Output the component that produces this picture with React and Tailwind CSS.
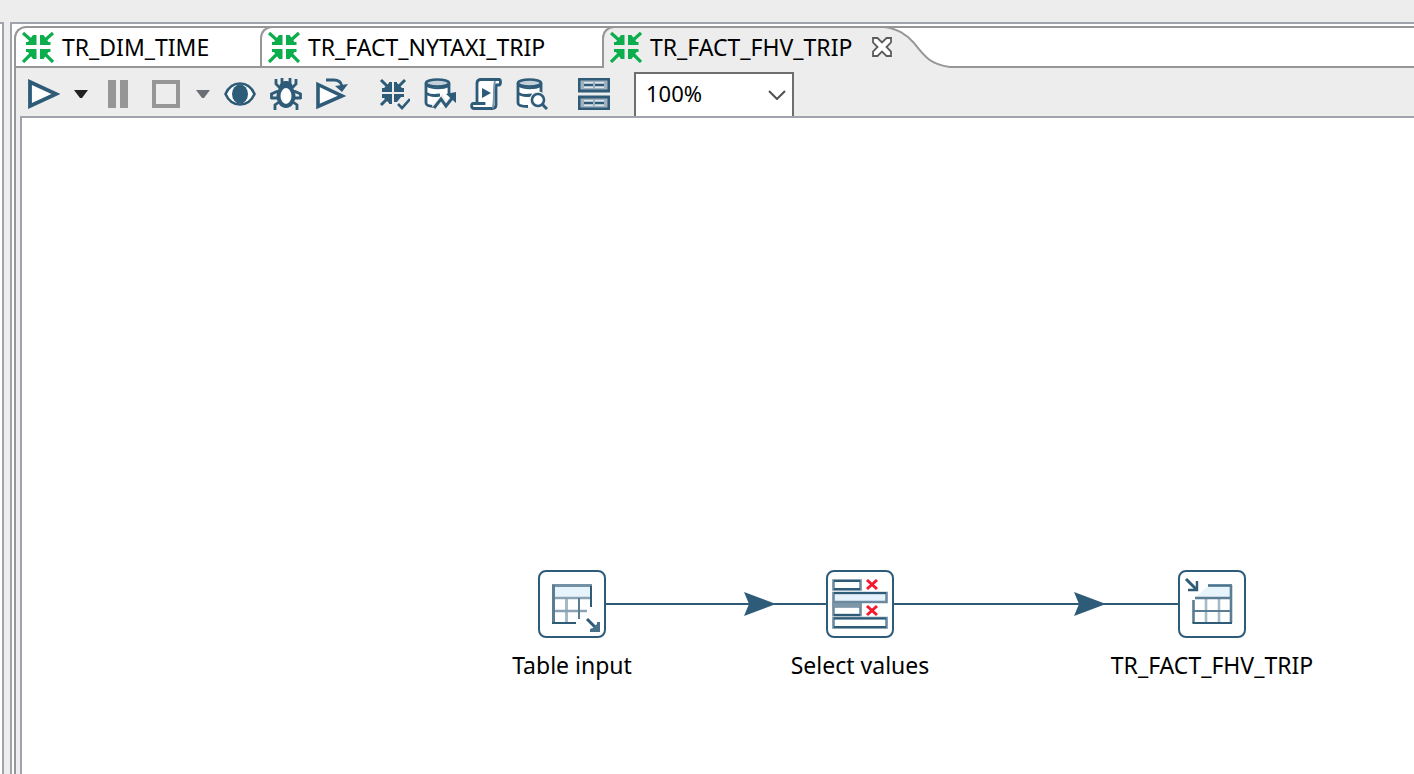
import { useState } from 'react';

const INK = '#2e5b78';

function TransformationIcon() {
  return (
    <svg viewBox="0 0 32 32" className="size-8 shrink-0" fill="#0bad4c" stroke="#0bad4c" aria-hidden="true">
      <path d="M1 2L10 10M31 2L22 10M1 31L10 22M31 31L22 22" fill="none" strokeWidth="3.200" />
      <g stroke="none">
        <path d="M14.500 4V14H4V11H6L11 4Z" />
        <path d="M18 4V14H28.500V11H26.500L21.500 4Z" />
        <path d="M14.500 28V18H4V21H6L11 28Z" />
        <path d="M18 28V18H28.500V21H26.500L21.500 28Z" />
      </g>
    </svg>
  );
}

function Glyph({ children }) {
  return (
    <svg viewBox="0 0 32 32" className="size-8" fill="none" stroke={INK} strokeWidth="3" aria-hidden="true">
      {children}
    </svg>
  );
}

const RunIcon = () => (
  <Glyph>
    <path d="M2 4L28 16L2 28Z" fill="#fff" strokeWidth="3.800" />
  </Glyph>
);

const EyeIcon = () => (
  <Glyph>
    <path d="M1.5 16C5 8 10 5.5 16 5.5S27 8 30.5 16C27 24 22 26.5 16 26.5S5 24 1.5 16Z" fill="#fff" strokeWidth="2.6" />
    <ellipse cx="16" cy="16" rx="8" ry="9.5" fill={INK} stroke="none" />
  </Glyph>
);

const BugIcon = () => (
  <Glyph>
    <path d="M6 1V6L10 10M26 1V6L22 10M12 0V5M20 0V5M1.500 21V16L8 13M30.500 21V16L24 13M1 20H7M31 20H25M5 32V27L9 24M27 32V27L23 24" strokeWidth="2.800" />
    <path d="M9 11C9 5 12 3 16 3S23 5 23 11Z" fill={INK} stroke="none" />
    <ellipse cx="16" cy="18" rx="7.500" ry="10" fill="#fff" strokeWidth="4" />
  </Glyph>
);

const ReplayIcon = () => (
  <Glyph>
    <path d="M2 6.500L26 18L2 28.500Z" fill="#fff" strokeWidth="3.600" />
    <path d="M10 2H18C23 2 25 4 26 8" strokeWidth="2.800" />
    <path d="M19 8L32 6L26 14Z" fill={INK} stroke="none" />
  </Glyph>
);

const VerifyIcon = () => (
  <Glyph>
    <path d="M3 2L10 9M27 2L20 9M3 27L10 20" />
    <g fill={INK} stroke="none">
      <path d="M14 4V14H4V10H6L11 5V4Z" />
      <path d="M16 4V14H26V10H24L19 5V4Z" />
      <path d="M14 26V16H4V20H6L11 25V26Z" />
      <path d="M16 16H26V19H23L19 24H16Z" />
    </g>
    <path d="M20 26L24 30L32 21" strokeWidth="2.600" />
  </Glyph>
);

function Cylinder() {
  return (
    <>
      <path d="M2 5V25C2 28 8 29.500 14 29H25V5" fill="#fff" stroke="none" />
      <path d="M2 5V25C2 27 5 28.500 12 28.500M25 5V16M2 15C5 17.500 10 18 16 17" strokeWidth="2.800" />
      <ellipse cx="13.500" cy="5" rx="11.500" ry="3.500" fill="#c3d0d9" strokeWidth="2.600" />
      <path d="M3 8C8 11 19 11 25 8" strokeWidth="2" />
    </>
  );
}

const ImpactIcon = () => (
  <Glyph>
    <Cylinder />
    <path d="M10 30L18 21L22 28L29 19" stroke="#ededed" strokeWidth="6" />
    <path d="M10 30L17 21L22 28L29 19" strokeWidth="3" />
    <path d="M22 16L32 14V25Z" fill={INK} stroke="none" />
  </Glyph>
);

const SqlIcon = () => (
  <Glyph>
    <path d="M7 24V5C7 2.500 8.500 1.500 11 1.500H29C31 1.500 31 7 29 7H26V27C26 29.500 24.500 30.500 22 30.500H4C1 30.500 1 25.500 3 25.500H14V27" fill="#fff" strokeWidth="2.800" />
    <path d="M22.500 30C25 27 23 9 25 3" stroke="#7f98aa" strokeWidth="2" />
    <path d="M12 10L21 15L12 20Z" fill={INK} stroke="none" />
  </Glyph>
);

const ExploreIcon = () => (
  <Glyph>
    <Cylinder />
    <circle cx="22" cy="22" r="8.500" fill="#ededed" stroke="none" />
    <path d="M26 26L31 31" strokeWidth="3" />
    <circle cx="22" cy="22" r="6" fill="#fff" strokeWidth="2.600" />
  </Glyph>
);

const ResultsIcon = () => (
  <Glyph>
    <path d="M1 1H31V13H1ZM1 19H31V31H1Z" fill="#9fb1be" strokeWidth="3" />
    <path d="M6 4H15V10H6ZM17 4H26V10H17ZM6 22H15V28H6ZM17 22H26V28H17Z" fill="#dfe7ec" stroke="none" />
    <path d="M6 7H15M17 7H26M6 25H15M17 25H26" strokeWidth="2.600" />
  </Glyph>
);

function PauseIcon() {
  return (
    <svg viewBox="0 0 34 32" className="h-8 w-[34px]" fill="#969696" aria-hidden="true">
      <path d="M6 2H14V30H6ZM18 2H26V30H18Z" />
    </svg>
  );
}

const StopIcon = () => (
  <Glyph>
    <path d="M4 4H28V28H4Z" stroke="#969696" strokeWidth="4" />
  </Glyph>
);

function Caret({ fill }) {
  return (
    <svg viewBox="0 0 14 8" className="h-2 w-3.5" fill={fill} aria-hidden="true">
      <path d="M0 0H14L8 8H6Z" />
    </svg>
  );
}

function ToolButton({ label, children }) {
  return (
    <button type="button" aria-label={label} title={label} className="flex shrink-0 items-center">
      {children}
    </button>
  );
}

function Tab({ title, className, active, onSelect }) {
  const tone = active ? 'bg-[#ededed] pb-0.5' : 'border-b-2 bg-white';
  return (
    <div className={`h-full shrink-0 border-t-2 border-[#969696] bg-white first:border-t-0 ${className}`}>
      <div className={`flex h-[42px] items-center rounded-tl-xl border-l-2 border-t-2 border-[#969696] ${tone} ${active ? '-mt-0.5' : 'tab-idle'}`}>
        <button type="button" role="tab" aria-selected={active} onClick={onSelect} className="flex items-center gap-2 pl-1.5">
          <TransformationIcon />
          <span className="whitespace-nowrap leading-8">{title}</span>
        </button>
        {active && (
          <button type="button" aria-label={`Close ${title}`} className="relative z-10 ml-5 shrink-0">
            <svg viewBox="0 0 20 20" className="size-5" fill="#fff" stroke="#5c5c5c" strokeWidth="1.800" aria-hidden="true">
              <path d="M1 1H5.500L10 5.500L14.500 1H19V5.500L14.500 10L19 14.500V19H14.500L10 14.500L5.500 19H1V14.500L5.500 10L1 5.500Z" />
            </svg>
          </button>
        )}
      </div>
    </div>
  );
}

const TableInputArt = () => (
  <>
    <path d="M15 16H53V27H15Z" fill="#e8f4fc" stroke="none" />
    <path d="M28.500 28V52" stroke="#a6b9c6" strokeWidth="3" />
    <path d="M16 41H49" stroke="#8ba2b2" strokeWidth="2.500" />
    <path d="M16 28H53" stroke="#8ba2b2" strokeWidth="2.500" />
    <path d="M41 28V49" strokeWidth="2" stroke="#5b7d94" />
    <path d="M14 15.500H54" stroke="#7390a4" strokeWidth="3" />
    <path d="M15.500 15V53" stroke="#5b7d94" strokeWidth="3" />
    <path d="M53 16V37M14 53H38" strokeWidth="2" />
    <path d="M49 49L58 58" strokeWidth="3" />
    <path d="M62 52V62H52V59L55 58L59 54V52Z" fill="#47708b" stroke="none" />
  </>
);

const SelectValuesArt = () => (
  <>
    <path d="M7.500 10.500H34.500V19.500H7.500ZM7.500 36.500H34.500V45H7.500ZM7.500 48H60.500V57.500H7.500Z" fill="#fff" stroke="#6b8a9f" strokeWidth="2.600" />
    <path d="M6 33H36V37H6Z" fill="#7d97a9" stroke="none" />
    <path d="M7.500 23H60.500V32H7.500Z" fill="#e6f1fb" stroke="#6b8a9f" strokeWidth="2.600" />
    <path d="M8 11H34M8 19H34M8 23H60M8 45H34M8 48.500H60M8 57H60" strokeWidth="2" />
    <path d="M41 10L51 19M51 10L41 19M41 36L51 45M51 36L41 45" stroke="#f5182f" strokeWidth="3" />
  </>
);

const TableOutputArt = () => (
  <>
    <path d="M17 28L29 17H53V28Z" fill="#e8f4fc" stroke="none" />
    <path d="M28 28V52M41 28V52" stroke="#a6b9c6" strokeWidth="2.600" />
    <path d="M15 41H53" stroke="#5b7d94" strokeWidth="2" />
    <path d="M30 15.500H54" stroke="#47708b" strokeWidth="2.600" />
    <path d="M17 28H53M53 15V53M15.500 53V30" stroke="#5b7d94" strokeWidth="2.600" />
    <path d="M14.500 53H54" strokeWidth="2" />
    <path d="M8 9L18 19" strokeWidth="3" />
    <path d="M19 11V20H10" strokeWidth="2.400" />
  </>
);

function Step({ label, className, children }) {
  return (
    <div className={`absolute flex w-[68px] flex-col items-center ${className}`}>
      <div className="size-[68px] shrink-0 rounded-lg border-2 border-[#2e5b78] bg-white">
        <svg viewBox="2 2 64 64" className="size-16" fill="none" stroke={INK} aria-hidden="true">
          {children}
        </svg>
      </div>
      <span className="mt-3 whitespace-nowrap leading-[30px]">{label}</span>
    </div>
  );
}

function Hop({ className, head }) {
  return (
    <div className={`absolute flex h-6 items-center ${className}`}>
      <div className="h-0.5 w-full bg-[#2e5b78]" />
      <svg viewBox="0 0 32 24" className={`absolute top-0 h-6 w-8 ${head}`} fill={INK} aria-hidden="true">
        <path d="M0 0L32 12L0 24L5 12Z" />
      </svg>
    </div>
  );
}

export default function App() {
  const [zoom, setZoom] = useState('100%');

  return (
    <div className="flex h-screen gap-1.5 overflow-hidden bg-[#ededed] pt-[22px] font-['Noto_Sans','Open_Sans',sans-serif] text-[23px] text-black">
      <aside className="w-1 shrink-0 border-r-2 border-t-2 border-[#a0a2ac] bg-white" />
      <main className="flex min-w-0 flex-1 flex-col border-l-2 border-t-2 border-[#a0a2ac] bg-white pl-0.5 pt-0.5">
        <div role="tablist" className="flex h-[42px] shrink-0">
          <Tab title="TR_DIM_TIME" className="w-[246px]" />
          <Tab title="TR_FACT_NYTAXI_TRIP" className="w-[342px] [&>.tab-idle]:-mt-0.5" />
          <Tab title="TR_FACT_FHV_TRIP" className="w-[282px]" active />
          <svg viewBox="0 0 66 42" className="h-[42px] w-[66px] shrink-0" aria-hidden="true">
            <path d="M0 1H66" stroke="#969696" strokeWidth="2" />
            <path d="M0 2C14 4 22 8 30 17C41 31 46 38 66 41V42H0Z" fill="#ededed" />
            <path d="M0 1C14 3 22 8 30 17C41 31 46 38 66 41" fill="none" stroke="#969696" strokeWidth="2" />
          </svg>
          <div className="flex-1 border-y-2 border-[#969696]" />
        </div>

        <div className="flex min-h-0 flex-1 flex-col border-l-2 border-[#969696] bg-[#ededed]">
          <div role="toolbar" aria-label="Transformation" className="flex h-12 shrink-0 items-center gap-[30px] pl-3 pt-1">
            <div className="flex items-center gap-3.5">
              <ToolButton label="Run"><RunIcon /></ToolButton>
              <ToolButton label="Run options"><Caret fill="#222222" /></ToolButton>
              <ToolButton label="Pause"><PauseIcon /></ToolButton>
              <ToolButton label="Stop"><StopIcon /></ToolButton>
              <ToolButton label="Stop options"><Caret fill="#6b6e75" /></ToolButton>
              <ToolButton label="Preview"><EyeIcon /></ToolButton>
              <ToolButton label="Debug"><BugIcon /></ToolButton>
              <ToolButton label="Replay"><ReplayIcon /></ToolButton>
            </div>
            <div className="flex items-center gap-3.5">
              <ToolButton label="Verify"><VerifyIcon /></ToolButton>
              <ToolButton label="Impact analysis"><ImpactIcon /></ToolButton>
              <ToolButton label="Get SQL"><SqlIcon /></ToolButton>
              <ToolButton label="Explore database"><ExploreIcon /></ToolButton>
            </div>
            <div className="flex items-center gap-6">
              <ToolButton label="Show results"><ResultsIcon /></ToolButton>
              <div className="relative h-11 w-40">
                <select
                  aria-label="Zoom"
                  value={zoom}
                  onChange={(e) => setZoom(e.target.value)}
                  className="size-full appearance-none border-2 border-b-0 border-[#6e6e6e] bg-white pb-1 pl-2.5 text-[22px]"
                >
                  <option>200%</option>
                  <option>150%</option>
                  <option>100%</option>
                  <option>75%</option>
                  <option>50%</option>
                </select>
                <svg viewBox="0 0 18 10" className="pointer-events-none absolute right-2 top-[18px] h-2.5 w-[18px]" fill="none" stroke="#505050" strokeWidth="2" aria-hidden="true">
                  <path d="M1 1L9 9L17 1" />
                </svg>
              </div>
            </div>
          </div>

          <div className="relative ml-1 min-h-0 flex-1 overflow-hidden border-l-2 border-t-2 border-[#a0a2ac] bg-white">
            <Hop className="left-[584px] top-[474px] w-[220px]" head="left-[138px]" />
            <Hop className="left-[872px] top-[474px] w-[284px]" head="left-[180px]" />
            <Step label="Table input" className="left-[516px] top-[452px]"><TableInputArt /></Step>
            <Step label="Select values" className="left-[804px] top-[452px]"><SelectValuesArt /></Step>
            <Step label="TR_FACT_FHV_TRIP" className="left-[1156px] top-[452px]"><TableOutputArt /></Step>
          </div>
        </div>
      </main>
    </div>
  );
}
